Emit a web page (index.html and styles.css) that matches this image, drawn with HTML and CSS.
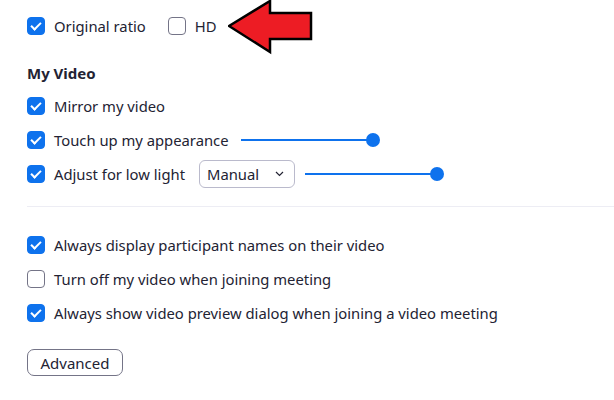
FILE: index.html
```html
<!DOCTYPE html>
<html lang="en">
<head>
    <meta charset="UTF-8">
    <title>Video Settings</title>
    <link rel="stylesheet" href="styles.css">
</head>
<body>

<div class="settings">
    <div class="row top-row">
        <label class="check"><span class="box on"></span>Original ratio</label>
        <label class="check hd"><span class="box"></span>HD</label>
        <svg class="arrow" width="90" height="58" viewBox="0 0 90 58">
            <polygon points="1,27 42,2 42,14 83,14 83,40 42,40 42,53" fill="#ed1c24" stroke="#000" stroke-width="2.5" stroke-linejoin="miter"/>
        </svg>
    </div>

    <h3 class="section-title">My Video</h3>
    <div class="row">
        <label class="check"><span class="box on"></span>Mirror my video</label>
    </div>
    <div class="row">
        <label class="check"><span class="box on"></span>Touch up my appearance</label>
        <div class="slider slider-touch"><span class="thumb"></span></div>
    </div>
    <div class="row">
        <label class="check"><span class="box on"></span>Adjust for low light</label>
        <div class="select">Manual
            <svg class="chevron" width="9" height="6" viewBox="0 0 9 6"><polyline points="1,1 4.5,4.5 8,1" fill="none" stroke="#232333" stroke-width="1.2"/></svg>
        </div>
        <div class="slider slider-light"><span class="thumb"></span></div>
    </div>

    <hr class="divider">

    <div class="row">
        <label class="check"><span class="box on"></span>Always display participant names on their video</label>
    </div>
    <div class="row">
        <label class="check"><span class="box"></span>Turn off my video when joining meeting</label>
    </div>
    <div class="row">
        <label class="check"><span class="box on"></span>Always show video preview dialog when joining a video meeting</label>
    </div>

    <button class="advanced">Advanced</button>
</div>

</body>
</html>
```

FILE: styles.css
```css
body {
    margin: 0;
    font-family: "Noto Sans", "Open Sans", sans-serif;
    font-size: 14.8px;
    color: #232333;
    background-color: #fff;
}

.settings {
    padding: 8px 0 0 27px;
}

.row {
    display: flex;
    align-items: center;
    height: 34px;
}

.top-row {
    height: 36px;
    position: relative;
}

.check {
    display: flex;
    align-items: center;
    white-space: nowrap;
}

.check.hd {
    margin-left: 22px;
}

.box {
    width: 16px;
    height: 16px;
    border: 1px solid #747487;
    border-radius: 4px;
    margin-right: 9px;
    box-sizing: content-box;
    position: relative;
}

.box.on {
    background-color: #0e72ed;
    border-color: #0e72ed;
}

.box.on::after {
    content: "";
    position: absolute;
    left: 5px;
    top: 2px;
    width: 4px;
    height: 8px;
    border-right: 2px solid #fff;
    border-bottom: 2px solid #fff;
    transform: rotate(45deg);
}

.arrow {
    position: absolute;
    left: 201px;
    top: -9px;
}

.section-title {
    font-size: 15px;
    font-weight: bold;
    margin: 16px 0 3px;
    height: 26px;
    line-height: 26px;
}

.slider {
    height: 2px;
    background-color: #0e72ed;
    position: relative;
}

.slider-touch {
    margin-left: 12px;
    width: 132px;
}

.slider-light {
    margin-left: 10px;
    width: 132px;
}

.thumb {
    position: absolute;
    right: -7px;
    top: -6px;
    width: 14px;
    height: 14px;
    border-radius: 50%;
    background-color: #0e72ed;
}

.select {
    margin-left: 14px;
    width: 96px;
    height: 28px;
    box-sizing: border-box;
    border: 1px solid #babacc;
    border-radius: 6px;
    padding: 0 10px 0 7px;
    display: flex;
    align-items: center;
    justify-content: space-between;
}

.divider {
    border: none;
    border-top: 1px solid #ededf4;
    margin: 15px 0 21px;
}

.advanced {
    margin-top: 19px;
    font-family: inherit;
    font-size: 15px;
    color: #232333;
    background-color: #fff;
    border: 1px solid #747487;
    border-radius: 7px;
    padding: 0 12px;
    height: 27px;
    width: 96px;
}
```
